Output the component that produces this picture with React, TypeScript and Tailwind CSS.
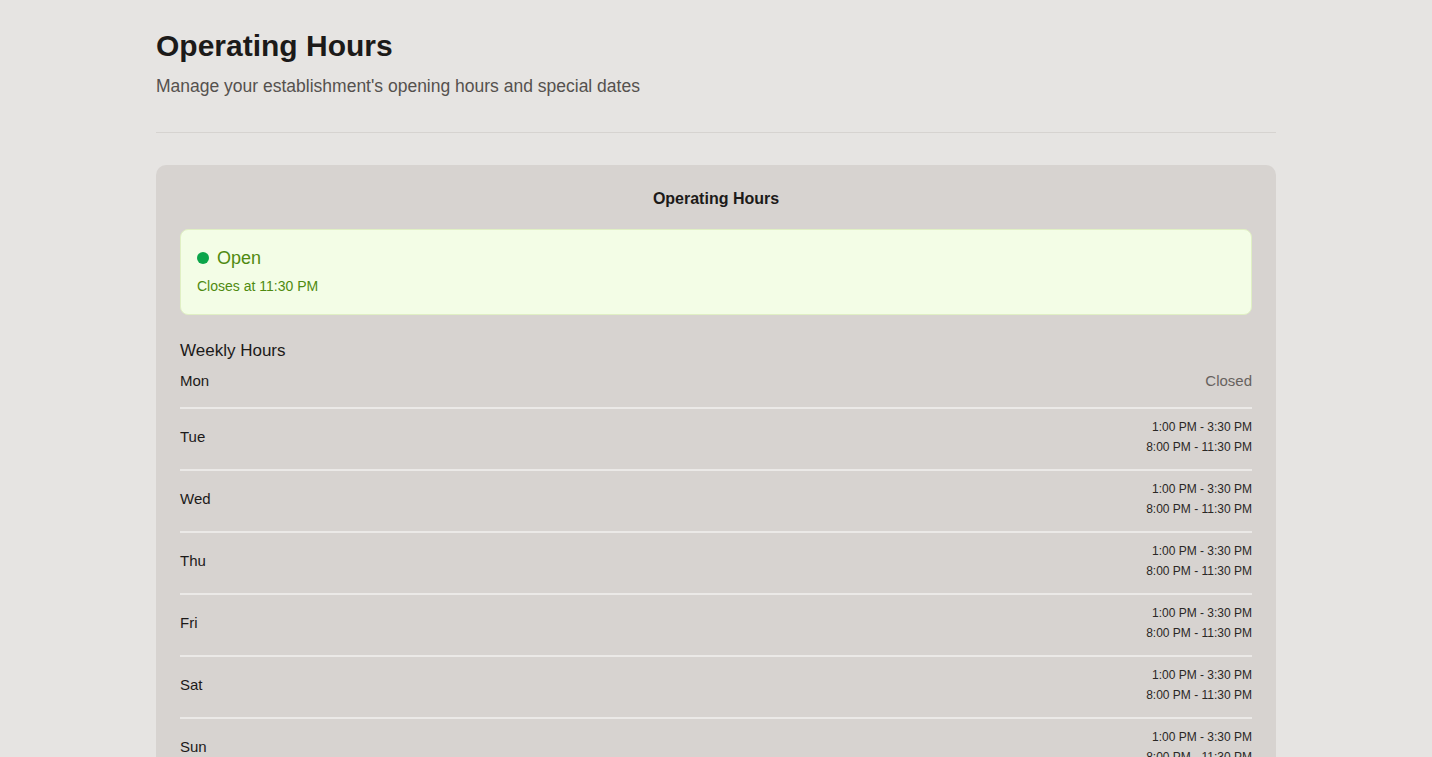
const week = [
  { day: 'Mon', hours: [] as string[] },
  { day: 'Tue', hours: ['1:00 PM - 3:30 PM', '8:00 PM - 11:30 PM'] },
  { day: 'Wed', hours: ['1:00 PM - 3:30 PM', '8:00 PM - 11:30 PM'] },
  { day: 'Thu', hours: ['1:00 PM - 3:30 PM', '8:00 PM - 11:30 PM'] },
  { day: 'Fri', hours: ['1:00 PM - 3:30 PM', '8:00 PM - 11:30 PM'] },
  { day: 'Sat', hours: ['1:00 PM - 3:30 PM', '8:00 PM - 11:30 PM'] },
  { day: 'Sun', hours: ['1:00 PM - 3:30 PM', '8:00 PM - 11:30 PM'] },
];

export default function App() {
  return (
    <div
      className="min-h-screen bg-[#e6e4e2] text-[#1c1a19]"
      style={{ fontFamily: '"Liberation Sans", Arial, sans-serif' }}
    >
      <div className="max-w-[1120px] mx-auto pt-7 pb-10">
        <h1 className="text-[30px] leading-9 font-bold">Operating Hours</h1>
        <p className="mt-2.5 text-[17.5px] leading-6 text-[#55514e]">
          Manage your establishment's opening hours and special dates
        </p>

        <div className="mt-[34px] h-px bg-[#d6d3d0]" />

        <div className="mt-8 rounded-[10px] bg-[#d7d3d0] px-6 pt-6 pb-6">
          <h2 className="text-center text-base leading-5 font-bold">Operating Hours</h2>

          <div className="mt-5 rounded-lg border border-[#e0f0c4] bg-[#f3fde6] px-4 pt-4 pb-[18px]">
            <div className="flex items-center gap-2 text-[18px] leading-6 text-[#4f8a10]">
              <span className="w-3 h-3 rounded-full bg-[#0ba54a]" />
              Open
            </div>
            <div className="mt-1.5 text-sm leading-5 text-[#4f8a10]">Closes at 11:30 PM</div>
          </div>

          <h3 className="mt-6 text-[17px] leading-6">Weekly Hours</h3>

          <div>
            {week.map((d, i) => (
              <div
                key={d.day}
                className={`flex items-center justify-between pt-2 ${d.hours.length === 0 ? 'pb-4' : 'pb-3'} ${i < week.length - 1 ? 'border-b-2 border-[#ebe9e7]' : ''}`}
              >
                <span className="text-[15px] leading-5">{d.day}</span>
                {d.hours.length === 0 ? (
                  <span className="text-[15px] leading-5 text-[#67625e]">Closed</span>
                ) : (
                  <div className="flex flex-col items-end text-xs leading-5 text-[#2a2725]">
                    {d.hours.map((h) => (
                      <span key={h}>{h}</span>
                    ))}
                  </div>
                )}
              </div>
            ))}
          </div>
        </div>
      </div>
    </div>
  );
}
